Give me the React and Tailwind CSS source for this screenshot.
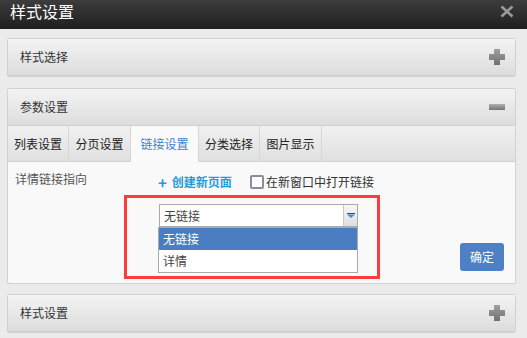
import React from 'react';

const font = { fontFamily: '"Noto Sans CJK SC", "Noto Sans", sans-serif' };

const PlusIcon = () => (
  <svg width="16" height="16" viewBox="0 0 16 16">
    <defs>
      <linearGradient id="pg" x1="0" y1="0" x2="0" y2="1">
        <stop offset="0" stopColor="#a0a0a0" />
        <stop offset="1" stopColor="#707070" />
      </linearGradient>
    </defs>
    <path d="M5 0h6v5h5v6h-5v5H5v-5H0V5h5z" fill="url(#pg)" />
  </svg>
);

const MinusIcon = () => (
  <div className="w-[16px] h-[6px] bg-gradient-to-b from-[#b0b0b0] to-[#757575]" />
);

const PanelHeader = ({ title, open }) => (
  <div className="flex items-center justify-between h-[37px] pl-[12px] pr-[10px] bg-gradient-to-b from-[#f3f3f3] to-[#dddddd] border-b border-[#cfcfcf]">
    <span className="text-[12px] text-[#333]">{title}</span>
    {open ? <MinusIcon /> : <PlusIcon />}
  </div>
);

const tabs = [
  { label: '列表设置', w: 'w-[61px]' },
  { label: '分页设置', w: 'w-[62px]' },
  { label: '链接设置', w: 'w-[68px]', active: true },
  { label: '分类选择', w: 'w-[61px]' },
  { label: '图片显示', w: 'w-[62px]' },
];

export default function App() {
  return (
    <div className="w-[527px] h-[338px] overflow-hidden bg-[#ebebeb]" style={font}>
      {/* title bar */}
      <div className="flex items-start justify-between h-[29px] pl-[10px] pr-[13px] bg-gradient-to-b from-[#3d3d3d] to-[#1f1f1f]">
        <span className="text-[16px] leading-[22px] text-white">样式设置</span>
        <svg width="14" height="13" viewBox="0 0 14 13" className="mt-[5px]">
          <path d="M1.5 1.5l11 10M12.5 1.5l-11 10" stroke="#9a9a9a" strokeWidth="2.6" />
        </svg>
      </div>

      <div className="flex flex-col pl-[7px] pr-[11px] pt-[9px]">
        {/* panel 1 */}
        <div className="border border-[#d2d2d2] rounded-[2px] shadow-[inset_0_1px_0_#fff]">
          <PanelHeader title="样式选择" />
        </div>

        {/* panel 2 */}
        <div className="mt-[11px] border border-[#d2d2d2] rounded-[2px] bg-[#f9f9f9]">
          <PanelHeader title="参数设置" open />
          <div className="flex h-[36px] bg-gradient-to-b from-[#f1f1f1] to-[#e0e0e0] border-b border-[#d0d0d0]">
            {tabs.map((t) => (
              <div
                key={t.label}
                className={
                  t.active
                    ? `${t.w} flex items-center justify-center text-[12px] text-[#3b82cf] bg-[#fafafa] border-r border-[#d6d6d6] -mb-px`
                    : `${t.w} flex items-center justify-center text-[12px] text-[#222] border-r border-[#d6d6d6]`
                }
              >
                {t.label}
              </div>
            ))}
          </div>

          <div className="relative flex h-[121px]">
            <div className="w-[150px] pl-[7px] pt-[9px] text-[12px] leading-[16px] text-[#555]">详情链接指向</div>

            <div className="flex flex-col">
              <div className="flex items-center h-[16px] mt-[12px] text-[12px]">
                <span className="text-[#1d9bdb] font-bold text-[15px] leading-none mr-[5px]">+</span>
                <span className="text-[#1d9bdb] font-bold">创建新页面</span>
                <span className="ml-[18px] w-[14px] h-[14px] border-2 border-[#8c8c9a] rounded-[2px] bg-white" />
                <span className="ml-[2px] text-[#333]">在新窗口中打开链接</span>
              </div>

              <div className="flex ml-[1px] mt-[14px] w-[199px] h-[23px] border border-[#aaaaaa] bg-white">
                <span className="flex-1 pl-[4px] text-[12px] leading-[21px] text-[#444]">无链接</span>
                <div className="flex items-center justify-center w-[14px] border-l border-[#c8c8c8] bg-gradient-to-b from-[#f7f7f7] to-[#dedede]">
                  <svg width="8" height="5" viewBox="0 0 8 5">
                    <rect x="0" y="0" width="8" height="1" fill="#3a4a60" />
                    <path d="M0 1.5h8L4 5z" fill="#3b8ed0" />
                  </svg>
                </div>
              </div>

              <div className="w-[200px] h-[46px] border border-[#aaaaaa] bg-white text-[12px]">
                <div className="h-[22px] pl-[4px] leading-[22px] bg-[#4a7dc2] text-white">无链接</div>
                <div className="h-[22px] pl-[4px] leading-[22px] text-[#444]">详情</div>
              </div>
            </div>

            <div className="ml-auto mr-[11px] mb-[12px] self-end flex items-center justify-center w-[44px] h-[28px] rounded-[3px] bg-[#4d80c6] text-white text-[12px]">
              确定
            </div>

            {/* highlight annotation */}
            <div className="absolute left-[116px] top-[33px] w-[256px] h-[84px] border-[3px] border-[#ff3b3b]" />
          </div>
        </div>

        {/* panel 3 */}
        <div className="mt-[10px] border border-[#d2d2d2] rounded-[2px]">
          <PanelHeader title="样式设置" />
        </div>
      </div>
    </div>
  );
}
